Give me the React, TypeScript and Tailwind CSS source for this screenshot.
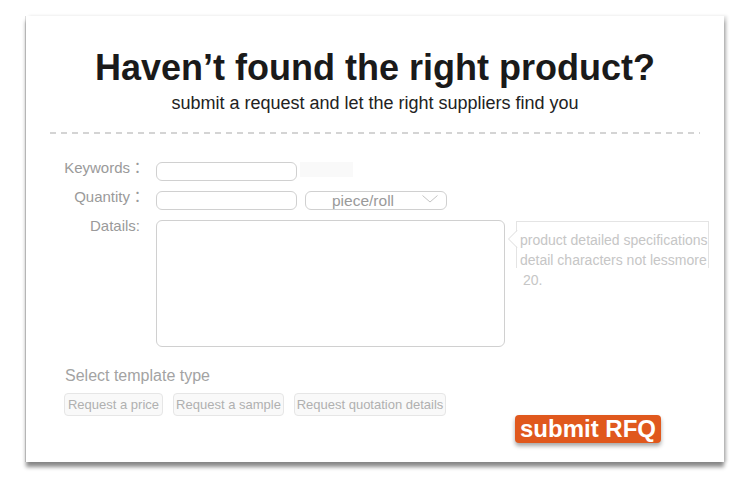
export default function App() {
  return (
    <div className="w-[750px] h-[478px] bg-white pt-[16px] pl-[26px] font-['Liberation_Sans','Noto_Sans_CJK_JP',sans-serif]">
      <div className="w-[698px] h-[446px] bg-white pt-[32px] shadow-[0_5px_4px_rgba(0,0,0,0.45),3px_0_3px_rgba(0,0,0,0.12),-1px_0_0_#dedede]">
        <h1 className="text-center text-[36px] leading-[40px] font-bold text-[#1a1a1a]">
          Haven’t found the right product?
        </h1>
        <p className="mt-[4px] text-center text-[18px] leading-[22px] text-[#222]">
          submit a request and let the right suppliers find you
        </p>
        <div className="mt-[18px] mx-[24px] h-[2px] bg-[repeating-linear-gradient(90deg,#d4d4d4_0px,#d4d4d4_6px,transparent_6px,transparent_11px)]" />

        <div className="mt-[28px]">
          <div className="flex items-start">
            <div className="w-[119px] text-right text-[15px] leading-[14px] -mt-[1px] text-[#9a9a9a] whitespace-nowrap">Keywords：</div>
            <div className="ml-[11px] w-[141px] h-[19px] border border-[#d0d0d0] rounded-[6px] bg-white" />
            <div className="ml-[3px] w-[53px] h-[15px] bg-[#f9f9f9]" />
          </div>
          <div className="flex items-start mt-[10px]">
            <div className="w-[119px] text-right text-[15px] leading-[14px] -mt-[1px] text-[#9a9a9a] whitespace-nowrap">Quantity：</div>
            <div className="ml-[11px] w-[141px] h-[19px] border border-[#d0d0d0] rounded-[6px] bg-white" />
            <div className="relative ml-[8px] w-[142px] h-[19px] border border-[#d0d0d0] rounded-[6px] bg-white flex items-center pl-[26px] text-[15.5px] text-[#9a9a9a]">
              piece/roll
              <svg className="absolute right-[8px] top-[3px]" width="16" height="8" viewBox="0 0 16 8">
                <polyline points="0.5,0.5 8,7 15.5,0.5" fill="none" stroke="#c4c4c4" strokeWidth="1" />
              </svg>
            </div>
          </div>
          <div className="flex items-start mt-[10px]">
            <div className="w-[119px] pr-[5px] text-right text-[15px] leading-[14px] -mt-[1px] text-[#9a9a9a] whitespace-nowrap">Datails:</div>
            <div className="ml-[11px] w-[349px] h-[127px] border border-[#d0d0d0] rounded-[6px] bg-white" />
            <div className="relative ml-[11px] mt-[1px] w-[193px] h-[47px] border-t border-l border-r border-[#e4e4e4] pl-[3px] pt-[8px] text-[14px] leading-[20px] text-[#c6c6c6] whitespace-nowrap">
              <svg className="absolute left-[-10px] top-[8px]" width="11" height="18" viewBox="0 0 11 18">
                <polygon points="11,0 1.5,9 11,18" fill="white" />
                <polyline points="10,0.5 1.5,9 10,17.5" fill="none" stroke="#dcdcdc" strokeWidth="1" />
              </svg>
              <div>product detailed specifications</div>
              <div>detail characters not lessmore</div>
              <div className="pl-[3px]">20.</div>
            </div>
          </div>
        </div>

        <div className="mt-[20px] ml-[39px] text-[16px] leading-[18px] text-[#a3a3a3]">Select template type</div>
        <div className="mt-[8px] ml-[38px] flex gap-[10px]">
          <div className="w-[99px] h-[23px] border border-[#e6e6e6] bg-[#f9f9f9] rounded-[4px] text-[13px] leading-[21px] text-[#b0b0b0] text-center whitespace-nowrap">Request a price</div>
          <div className="w-[111px] h-[23px] border border-[#e6e6e6] bg-[#f9f9f9] rounded-[4px] text-[13px] leading-[21px] text-[#b0b0b0] text-center whitespace-nowrap">Request a sample</div>
          <div className="w-[152px] h-[23px] border border-[#e6e6e6] bg-[#f9f9f9] rounded-[4px] text-[13px] leading-[21px] text-[#b0b0b0] text-center whitespace-nowrap">Request quotation details</div>
        </div>
        <div className="-mt-[1px] flex justify-end pr-[63px]">
          <button className="w-[146px] h-[28px] bg-[#e0581d] rounded-[4px] text-white font-bold text-[24px] leading-[28px] whitespace-nowrap shadow-[0_3px_4px_rgba(0,0,0,0.35)]">
            submit RFQ
          </button>
        </div>
      </div>
    </div>
  );
}
